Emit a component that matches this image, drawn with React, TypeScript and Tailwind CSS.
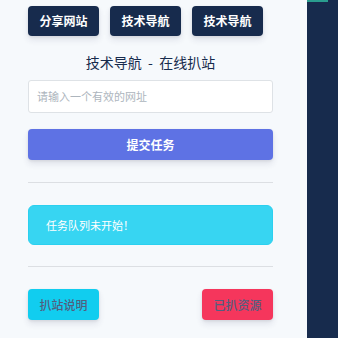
export default function App() {
  const font = { fontFamily: '"Noto Sans CJK SC", "Noto Sans", sans-serif' };
  return (
    <div className="flex w-[338px] h-[338px] overflow-hidden" style={font}>
      <div className="w-[307px] h-full bg-[#f6f9fc] pl-7 pr-[34px] pt-[6px]">
        <div className="flex gap-[11px]">
          <button className="w-[71px] h-[30px] rounded bg-[#172b4d] text-white text-[12px] font-bold shadow-[0_4px_6px_rgba(50,50,93,0.11),0_1px_3px_rgba(0,0,0,0.08)]">分享网站</button>
          <button className="w-[71px] h-[30px] rounded bg-[#172b4d] text-white text-[12px] font-bold shadow-[0_4px_6px_rgba(50,50,93,0.11),0_1px_3px_rgba(0,0,0,0.08)]">技术导航</button>
          <button className="w-[71px] h-[30px] rounded bg-[#172b4d] text-white text-[12px] font-bold shadow-[0_4px_6px_rgba(50,50,93,0.11),0_1px_3px_rgba(0,0,0,0.08)]">技术导航</button>
        </div>
        <div className="mt-[15px] text-center text-[14px] leading-[22px] text-[#172b4d] whitespace-pre">{'技术导航  -  在线扒站'}</div>
        <div className="mt-[7px] h-[33px] bg-white border border-[#dee2e6] rounded-[3px] flex items-center pl-[8px] text-[11px] text-[#adb5bd]">请输入一个有效的网址</div>
        <button className="mt-[16px] w-full h-[31px] rounded bg-[#5e72e4] text-white text-[12px] font-bold shadow-[0_4px_6px_rgba(50,50,93,0.11),0_1px_3px_rgba(0,0,0,0.08)]">提交任务</button>
        <div className="mt-[22px] h-px bg-[#dcdfe3]"></div>
        <div className="mt-[22px] h-[40px] rounded-md bg-[#37d5f2] border border-[#2bd0ef] flex items-center pl-[17px] text-[11px] text-white">任务队列未开始！</div>
        <div className="mt-[21px] h-px bg-[#dcdfe3]"></div>
        <div className="mt-[22px] flex justify-between">
          <button className="w-[71px] h-[31px] rounded bg-[#11cdef] text-[#525f7f] text-[12px] font-medium shadow-[0_4px_6px_rgba(50,50,93,0.11),0_1px_3px_rgba(0,0,0,0.08)]">扒站说明</button>
          <button className="w-[71px] h-[31px] rounded bg-[#f5365c] text-[#525f7f] text-[12px] font-medium shadow-[0_4px_6px_rgba(50,50,93,0.11),0_1px_3px_rgba(0,0,0,0.08)]">已扒资源</button>
        </div>
      </div>
      <div className="flex-1 h-full bg-[#172b4d]">
        <div className="w-[21px] h-[2px] bg-[#2a9d8f]"></div>
      </div>
    </div>
  );
}
